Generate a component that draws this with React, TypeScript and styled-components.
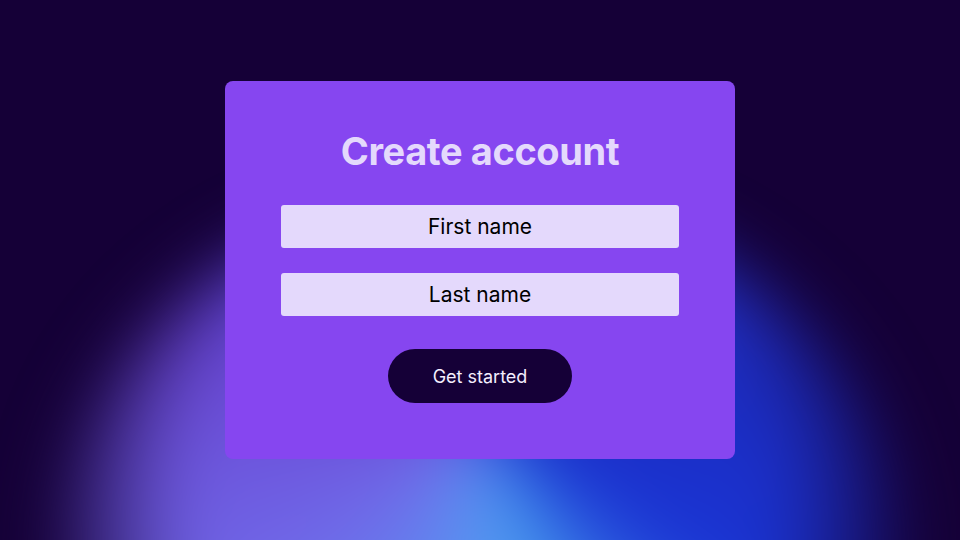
import React from "react";
import styled, { createGlobalStyle } from "styled-components";

const GlobalStyle = createGlobalStyle`
  html, body {
    margin: 0;
    padding: 0;
    background: #150037;
  }
  * {
    box-sizing: border-box;
  }
`;

export default function App() {
  return (
    <>
      <GlobalStyle />
      <Page>
        <Glow />
        <Card>
          <Title>Create account</Title>
          <Field placeholder="First name" />
          <Field placeholder="Last name" />
          <StartButton>Get started</StartButton>
        </Card>
      </Page>
    </>
  );
}

const Page = styled.main`
  position: relative;
  width: 960px;
  height: 540px;
  overflow: hidden;
  background: #150037;

  display: flex;
  justify-content: center;
  align-items: flex-start;
  padding-top: 81px;
  font-family: Inter, "Liberation Sans", sans-serif;
`;

const Glow = styled.div`
  position: absolute;
  left: 50%;
  top: 195px;
  width: 840px;
  height: 720px;
  transform: translateX(-50%);
  border-radius: 50%;
  background:
    radial-gradient(ellipse at 50% 42%, rgba(21, 0, 55, 0) 50%, rgba(21, 0, 55, 0.9) 74%),
    conic-gradient(
      from 0deg at 50% 32%,
      #3a3bd8 0deg,
      #1c2cc0 80deg,
      #1a34d4 120deg,
      #4aa2f0 164deg,
      #6088f0 195deg,
      #7068e8 235deg,
      #6a48d4 285deg,
      #4a3bd0 330deg,
      #3a3bd8 360deg
    );
  filter: blur(34px);
`;

const Card = styled.section`
  position: relative;
  width: 510px;
  height: 378px;
  border-radius: 8px;
  background: #8646f0;

  display: flex;
  flex-direction: column;
  align-items: center;
  padding-top: 48px;
`;

const Title = styled.h1`
  margin: 0 0 32px;
  font-size: 38px;
  line-height: 44px;
  font-weight: 700;
  letter-spacing: -0.4px;
  color: #e4d9fc;
`;

const Field = styled.input`
  width: 398px;
  height: 43px;
  margin-bottom: 25px;
  border: none;
  border-radius: 3px;
  background: #e4d9fc;
  font-family: inherit;
  font-size: 21px;
  text-align: center;
  color: #000;
  outline: none;

  &::placeholder {
    color: #000;
    opacity: 1;
  }
`;

const StartButton = styled.button`
  margin-top: 8px;
  width: 184px;
  height: 54px;
  border: none;
  border-radius: 27px;
  background: #150037;
  color: #f3eefe;
  font-family: inherit;
  font-size: 18px;
  cursor: pointer;
`;
